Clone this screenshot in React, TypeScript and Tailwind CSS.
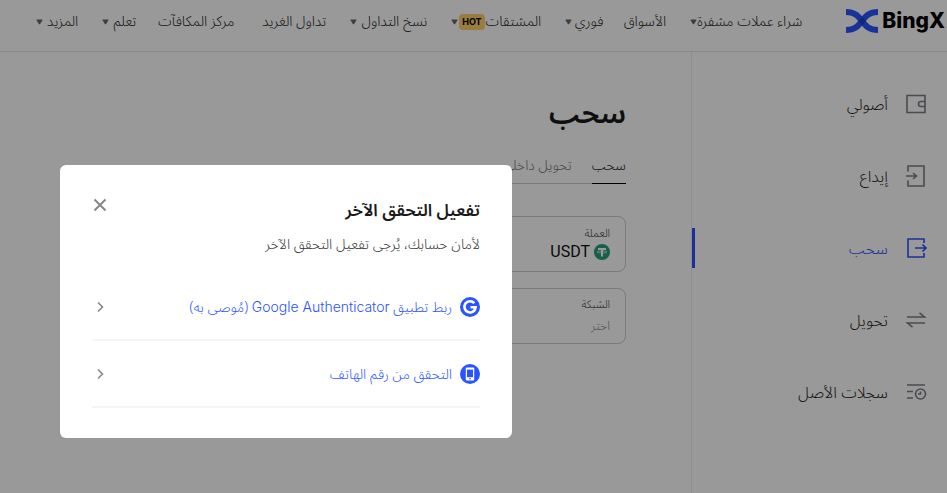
import { clsx } from "clsx"

const navItems = [
  { label: "شراء عملات مشفرة", menu: true, width: "w-[112px]" },
  { label: "الأسواق", menu: false, width: "w-[39px]" },
  { label: "فوري", menu: true, width: "w-[38px]" },
  { label: "المشتقات", menu: true, hot: true, width: "w-[90px]" },
  { label: "نسخ التداول", menu: true, width: "w-[77px]" },
  { label: "تداول الغريد", menu: false, width: "w-[68px]" },
  { label: "مركز المكافآت", menu: false, width: "w-[74px]" },
  { label: "تعلم", menu: true, width: "w-[34px]" },
  { label: "المزيد", menu: true, width: "w-[42px]" },
]

const sideItems = [
  { label: "أصولي", icon: WalletIcon },
  { label: "إيداع", icon: DepositIcon },
  { label: "سحب", icon: WithdrawIcon, active: true },
  { label: "تحويل", icon: TransferIcon },
  { label: "سجلات الأصل", icon: RecordsIcon },
]

function WalletIcon() {
  return (
    <svg width="22" height="22" viewBox="0 0 22 22" fill="none" stroke="currentColor" strokeWidth="1.6">
      <path d="M2 2.500h18v17H2z" />
      <path d="M20 8.500h-4a2.500 2.500 0 0 0 0 5h4" />
    </svg>
  )
}

function DepositIcon() {
  return (
    <svg width="22" height="22" viewBox="0 0 22 22" fill="none" stroke="currentColor" strokeWidth="1.6">
      <path d="M3 6.500V1h16v20H3v-5.500M1 11h10.500M8 8l3.500 3L8 14" />
    </svg>
  )
}

function WithdrawIcon() {
  return (
    <svg width="22" height="22" viewBox="0 0 22 22" fill="none" stroke="currentColor" strokeWidth="1.6">
      <path d="M19 6V2H3v18h16v-4M10 11h11M17.500 7.500L21 11l-3.500 3.500" />
    </svg>
  )
}

function TransferIcon() {
  return (
    <svg width="22" height="22" viewBox="0 0 22 22" fill="none" stroke="currentColor" strokeWidth="1.6">
      <path d="M2 8h17.500L14.500 3.800M20 14H2.500l5 4.200" />
    </svg>
  )
}

function RecordsIcon() {
  return (
    <svg width="22" height="22" viewBox="0 0 22 22" fill="none" stroke="currentColor" strokeWidth="1.6">
      <path d="M2 4h18M2 10.500h6M2 17h6" />
      <circle cx="15.500" cy="13" r="5" />
      <path d="M15.500 10.500V13H13" />
    </svg>
  )
}

function Logo() {
  return (
    <a href="#" dir="ltr" aria-label="BingX" className="flex shrink-0 items-center gap-1">
      <svg width="32" height="26" viewBox="0 0 32 26" fill="none" stroke="#2a54ff" strokeWidth="6">
        <path d="M0 4c9 0 12 4 16 9s7 9 16 9" />
        <path d="M32 4c-9 0-12 4-16 9s-7 9-16 9" />
        <path d="M16 8.500l3.500 4.500-3.500 4.500-3.500-4.500z" fill="#1f42cc" stroke="none" />
      </svg>
      <span className="font-[Inter] text-[21px] leading-6 font-extrabold text-black">BingX</span>
    </a>
  )
}

function Caret() {
  return (
    <svg width="7" height="6" viewBox="0 0 7 6" className="shrink-0 text-[#666]">
      <path d="M1.200 .5h4.600c.6 0 .9.600.5 1.100L4.100 4.900c-.3.400-.9.400-1.200 0L.7 1.600C.3 1.100.6.5 1.200.5z" fill="currentColor" />
    </svg>
  )
}

function Header() {
  return (
    <header className="flex h-[52px] items-start gap-11 border-b border-[#e4e4e4] pr-[2px]">
      <div className="pt-2"><Logo /></div>
      <nav className="flex h-11 flex-1 items-center gap-6 text-sm font-light text-[#222]">
        {navItems.map((item) => (
          <a key={item.label} href="#" className={clsx("flex shrink-0 items-center justify-between whitespace-nowrap", item.width)}>
            <span>{item.label}</span>
            {item.hot && <span className="rounded-sm bg-[#ffcf6b] px-[3px] font-[Inter] text-[9px] leading-4 font-bold text-black">HOT</span>}
            {item.menu && <Caret />}
          </a>
        ))}
      </nav>
    </header>
  )
}

function Sidebar() {
  return (
    <aside className="w-64 shrink-0 border-l border-[#ececec] pt-4">
      {sideItems.map((item) => (
        <a
          key={item.label}
          href="#"
          className={clsx("relative flex h-[72px] items-center gap-[17px] pr-5", item.active ? "text-[#2a54ff]" : "text-[#222]")}
        >
          <span className={item.active ? "" : "text-[#7c7e86]"}><item.icon /></span>
          <span className="pt-0.5 text-base font-light">{item.label}</span>
          {item.active && <span className="absolute top-4 left-0 h-10 w-[3px] bg-[#2a54ff]" />}
        </a>
      ))}
    </aside>
  )
}

function Withdraw() {
  return (
    <main className="min-w-0 flex-1 pt-10 pr-[65px] pl-16">
      <h1 className="text-[29px] leading-11 font-semibold text-[#1a1a1a]">سحب</h1>
      <div className="mt-3 flex h-9 gap-5 border-b border-[#ccc] text-sm font-light">
        <button type="button" className="-mb-px border-b border-black text-[#222]">سحب</button>
        <button type="button" className="text-[#777]">تحويل داخلي</button>
      </div>
      <button type="button" className="mt-8 block h-14 w-full rounded-lg border border-[#ccc] px-[15px] text-right">
        <span className="block text-[11px] leading-4 font-light text-[#333]">العملة</span>
        <span className="flex items-center gap-1 text-base leading-5 text-[#111]">
          <svg width="16" height="16" viewBox="0 0 16 16">
            <circle cx="8" cy="8" r="8" fill="#26a17b" />
            <path d="M4 4h8v2H9v6.500H7V6H4z" fill="#fff" />
            <ellipse cx="8" cy="8" rx="5" ry="1" fill="none" stroke="#fff" strokeWidth=".6" />
          </svg>
          <span className="font-[Roboto]">USDT</span>
        </span>
      </button>
      <button type="button" className="mt-4 block h-14 w-full rounded-lg border border-[#ccc] px-[15px] text-right">
        <span className="block text-[11px] leading-5 font-light text-[#333]">الشبكة</span>
        <span className="mt-0.5 block text-xs leading-5 font-light text-[#888]">اختر</span>
      </button>
    </main>
  )
}

function Chevron() {
  return (
    <svg width="16" height="16" viewBox="0 0 16 16" fill="none" stroke="#888" strokeWidth="1.6">
      <path d="M6 3.500L10.500 8 6 12.500" />
    </svg>
  )
}

function GoogleIcon() {
  return (
    <svg width="20" height="20" viewBox="0 0 20 20">
      <circle cx="10" cy="10" r="10" fill="#2a54ff" />
      <path d="M14.300 6.200A5.600 5.600 0 1 0 15.600 10.300H10.500" fill="none" stroke="#fff" strokeWidth="2.600" />
    </svg>
  )
}

function PhoneIcon() {
  return (
    <svg width="20" height="20" viewBox="0 0 20 20">
      <circle cx="10" cy="10" r="10" fill="#2a54ff" />
      <rect x="5.800" y="3.600" width="8.400" height="12.800" rx="1" fill="#fff" />
      <path d="M7 5.600h6v7.600H7z" fill="#2a54ff" />
      <circle cx="10" cy="14.800" r=".8" fill="#2a54ff" />
    </svg>
  )
}

function VerifyDialog() {
  return (
    <div className="fixed inset-0 bg-black/40">
      <section
        role="dialog"
        aria-labelledby="verify-title"
        className="absolute top-[165px] left-[60px] w-[452px] rounded-md bg-white px-8 pt-8 pb-[30px]"
      >
        <div className="flex items-start justify-between">
          <h2 id="verify-title" className="text-[17px] leading-7 font-semibold text-[#1a1a1a]">تفعيل التحقق الآخر</h2>
          <button type="button" aria-label="إغلاق">
            <svg width="16" height="16" viewBox="0 0 16 16" fill="none" stroke="#888" strokeWidth="2">
              <path d="M2.500 2.500l11 11M13.500 2.500l-11 11" />
            </svg>
          </button>
        </div>
        <p className="mt-2 text-sm leading-6 font-light text-[#333]">لأمان حسابك، يُرجى تفعيل التحقق الآخر</p>
        <div className="mt-[17px] text-sm font-light text-[#2a54ff]">
          <a href="#" className="flex h-[67px] items-center gap-2 border-b-2 border-[#f5f5f5]">
            <GoogleIcon />
            <span className="flex-1 pt-0.5">ربط تطبيق <bdi className="font-[Inter]">Google Authenticator</bdi> (مُوصى به)</span>
            <Chevron />
          </a>
          <a href="#" className="flex h-[67px] items-center gap-2 border-b-2 border-[#f5f5f5]">
            <PhoneIcon />
            <span className="flex-1 pt-0.5">التحقق من رقم الهاتف</span>
            <Chevron />
          </a>
        </div>
      </section>
    </div>
  )
}

export default function App() {
  return (
    <div dir="rtl" className="flex min-h-screen flex-col bg-white font-['Noto_Sans_Arabic','Open_Sans','Noto_Sans',sans-serif]">
      <Header />
      <div className="flex flex-1">
        <Sidebar />
        <Withdraw />
      </div>
      <VerifyDialog />
    </div>
  )
}
